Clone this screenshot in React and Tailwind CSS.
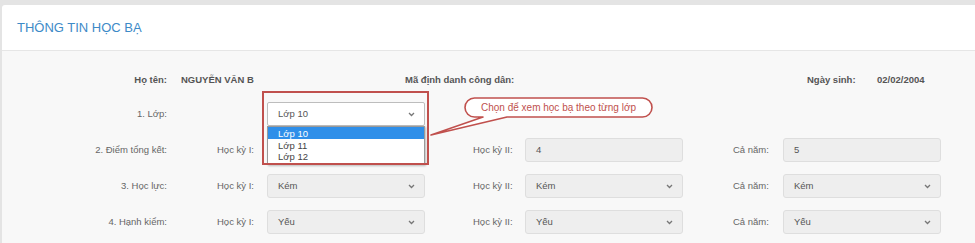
import React from "react";

const font = { fontFamily: '"Liberation Sans", Arial, sans-serif' };

function Chevron() {
  return (
    <svg width="7" height="5" viewBox="0 0 7 5" className="shrink-0">
      <path d="M1 1 L3.5 3.5 L6 1" fill="none" stroke="#777" strokeWidth="1.3" />
    </svg>
  );
}

function Field({ value, select }) {
  return (
    <div className="w-[158px] h-[24px] bg-[#eeeeee] border border-[#dedede] rounded-[3px] flex items-center justify-between pl-[10px] pr-[9px] text-[9.5px] text-[#555]">
      <span>{value}</span>
      {select && <Chevron />}
    </div>
  );
}

function Row({ label, type, a, b, c, hideFirst }) {
  const sel = type === "select";
  return (
    <div className="flex items-center h-[24px]">
      <div className="w-[165px] text-right text-[9.5px] text-[#666]">{label}</div>
      <div className="ml-[50px] w-[50px] text-[9.5px] text-[#666]">Học kỳ I:</div>
      {hideFirst ? <div className="w-[158px] h-[24px]" /> : <Field value={a} select={sel} />}
      <div className="ml-[48px] w-[52px] text-[9.5px] text-[#666]">Học kỳ II:</div>
      <Field value={b} select={sel} />
      <div className="ml-[50px] w-[50px] text-[9.5px] text-[#666]">Cả năm:</div>
      <Field value={c} select={sel} />
    </div>
  );
}

export default function App() {
  return (
    <div className="w-[975px] h-[243px] bg-[#e4e4e4] pt-[5px] pl-[2px] overflow-hidden" style={font}>
      <div className="bg-white rounded-tl-[3px] h-[238px] flex flex-col">
        <div className="h-[46px] border-b border-[#e6e6e6] flex items-center pl-[15px] text-[13px] text-[#3d8ac7] pt-[1px]">
          THÔNG TIN HỌC BẠ
        </div>
        <div className="flex-1 bg-[#f8f8f8] pt-[17px] relative">
          <div className="flex items-center h-[24px] text-[9.5px] font-bold text-[#555]">
            <div className="w-[165px] text-right">Họ tên:</div>
            <div className="ml-[14px] w-[224px]">NGUYỄN VĂN B</div>
            <div className="w-[402px]">Mã định danh công dân:</div>
            <div className="w-[70px]">Ngày sinh:</div>
            <div>02/02/2004</div>
          </div>

          <div className="mt-[10px] flex flex-col gap-[12px]">
            <div className="flex items-center h-[24px]">
              <div className="w-[165px] text-right text-[9.5px] text-[#666]">1. Lớp:</div>
              <div className="ml-[100px] relative">
                <div className="w-[158px] h-[24px] bg-white border border-[#bdbdbd] rounded-[2px] flex items-center justify-between pl-[10px] pr-[9px] text-[9.5px] text-[#555]">
                  <span>Lớp 10</span>
                  <Chevron />
                </div>
                <div className="absolute left-0 top-[24px] w-[158px] bg-white border border-[#9a9a9a] text-[9.5px] text-[#444] leading-[11px] pb-[2px] shadow-[1px_1px_2px_rgba(0,0,0,0.25)]">
                  <div className="bg-[#2f8fe9] text-white pl-[10px] h-[12px] flex items-center">Lớp 10</div>
                  <div className="pl-[10px] h-[11px] flex items-center mt-[1px]">Lớp 11</div>
                  <div className="pl-[10px] h-[11px] flex items-center">Lớp 12</div>
                </div>
                <div className="absolute left-[-5px] top-[-11px] w-[167px] h-[74px] border-2 border-[#c0504d] pointer-events-none" />
              </div>
            </div>
            <Row label="2. Điểm tổng kết:" type="input" a="" b="4" c="5" hideFirst />
            <Row label="3. Học lực:" type="select" a="Kém" b="Kém" c="Kém" />
            <Row label="4. Hạnh kiểm:" type="select" a="Yếu" b="Yếu" c="Yếu" />
          </div>

          <div className="absolute left-[423px] top-[43px] w-[235px] h-[45px]">
            <svg width="235" height="45" viewBox="0 0 235 45" className="absolute inset-0">
              <path
                d="M49.5 4 H217.5 A9.5 9.5 0 0 1 217.5 23 H82 L6 41 L58 23 H49.5 A9.5 9.5 0 0 1 49.5 4 Z"
                fill="white"
                stroke="#c0504d"
                strokeWidth="1.6"
                strokeLinejoin="round"
              />
            </svg>
            <div className="absolute left-[40px] top-[4px] w-[187px] h-[19px] flex items-center justify-center text-[10px] text-[#c0504d]">
              Chọn để xem học bạ theo từng lớp
            </div>
          </div>
        </div>
      </div>
    </div>
  );
}
